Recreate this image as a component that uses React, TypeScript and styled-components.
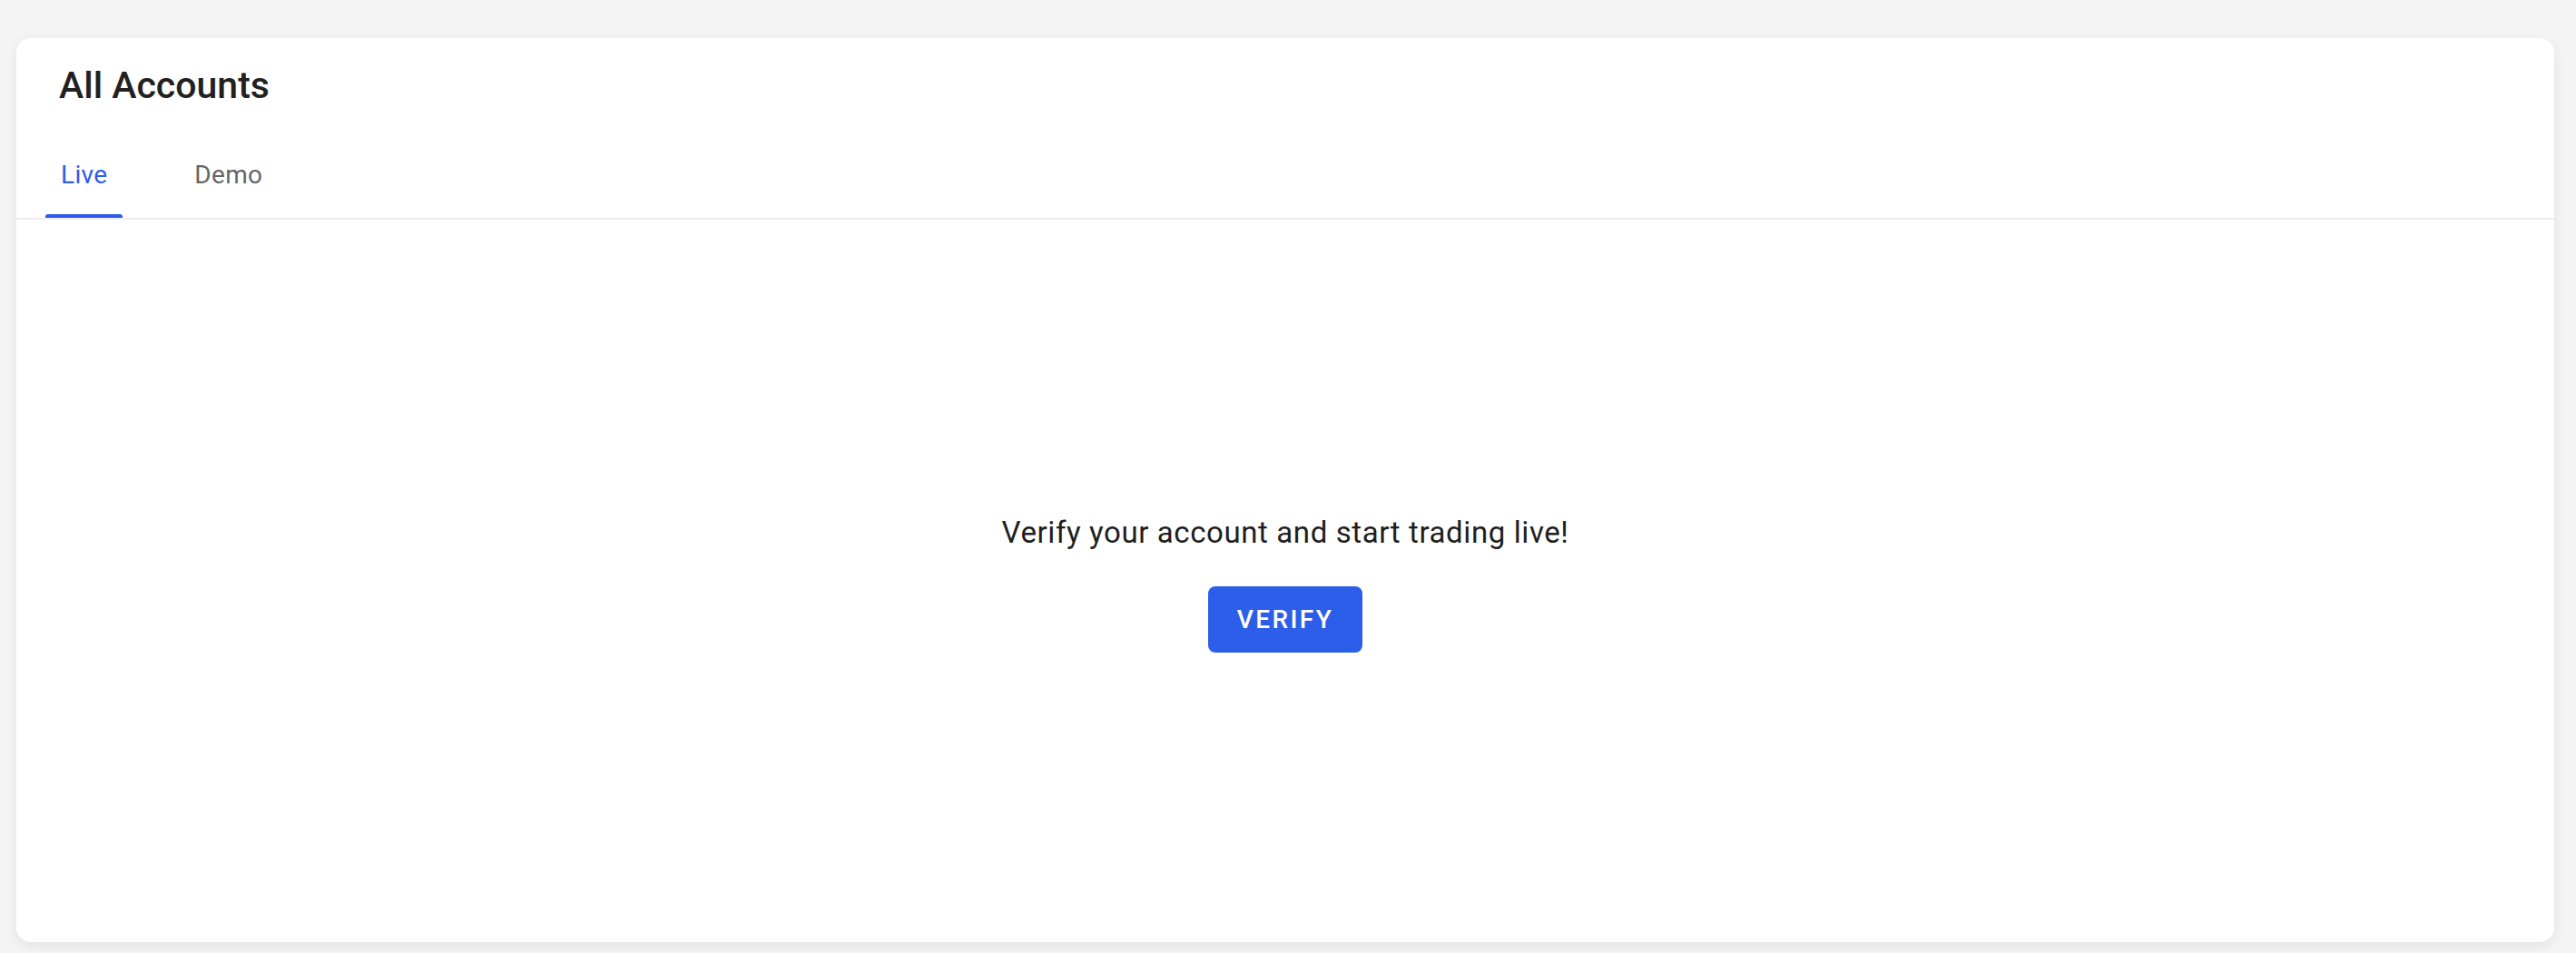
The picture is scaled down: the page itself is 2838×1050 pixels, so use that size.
import { useState } from 'react';
import styled, { createGlobalStyle } from 'styled-components';

const GlobalStyle = createGlobalStyle`
  html, body {
    margin: 0;
    padding: 0;
    background: #f4f4f4;
    font-family: Roboto, 'Liberation Sans', sans-serif;
  }
  * {
    box-sizing: border-box;
  }
`;

const tabs = ['Live', 'Demo'];

export default function App() {
  const [active, setActive] = useState('Live');
  return (
    <>
      <GlobalStyle />
      <Page>
        <Card>
          <Title>All Accounts</Title>
          <TabBar>
            {tabs.map((tab) => (
              <Tab
                key={tab}
                $active={active === tab}
                onClick={() => setActive(tab)}
              >
                {tab}
              </Tab>
            ))}
          </TabBar>
          <Body>
            <Message>Verify your account and start trading live!</Message>
            <VerifyButton>VERIFY</VerifyButton>
          </Body>
        </Card>
      </Page>
    </>
  );
}

const Page = styled.div`
  height: 100vh;
  padding: 42px 24px 12px 18px;
  display: flex;
`;

const Card = styled.div`
  flex: 1;
  display: flex;
  flex-direction: column;
  background: #ffffff;
  border-radius: 16px;
  box-shadow: 0 4px 14px rgba(0, 0, 0, 0.08);
  overflow: hidden;
`;

const Title = styled.h1`
  margin: 27px 0 0 0;
  padding: 0 47px;
  font-size: 41px;
  line-height: 50px;
  font-weight: 500;
  color: #212121;
`;

const TabBar = styled.div`
  display: flex;
  gap: 62px;
  margin-top: 25px;
  padding: 0 32px;
  border-bottom: 2px solid #eeeeee;
`;

interface TabProps {
  $active: boolean;
}

const Tab = styled.button<TabProps>`
  position: relative;
  height: 96px;
  padding: 0 17px;
  border: none;
  background: none;
  font-family: Roboto, 'Liberation Sans', sans-serif;
  font-size: 28px;
  font-weight: 400;
  letter-spacing: 0.3px;
  color: ${({ $active }) => ($active ? '#2c5ce8' : '#666666')};
  cursor: pointer;

  &::after {
    content: '';
    position: absolute;
    left: 0;
    right: 0;
    bottom: 0;
    height: 4px;
    border-radius: 3px 3px 0 0;
    background: ${({ $active }) => ($active ? '#2c5ce8' : 'transparent')};
  }
`;

const Body = styled.div`
  flex: 1;
  display: flex;
  flex-direction: column;
  align-items: center;
  justify-content: center;
`;

const Message = styled.p`
  margin: 0 0 34px 0;
  font-size: 33px;
  line-height: 50px;
  letter-spacing: 0.6px;
  color: #1f1f1f;
`;

const VerifyButton = styled.button`
  height: 73px;
  padding: 0 32px;
  border: none;
  border-radius: 8px;
  background: #2c5ee9;
  color: #ffffff;
  font-family: Roboto, 'Liberation Sans', sans-serif;
  font-size: 28px;
  font-weight: 500;
  letter-spacing: 2.4px;
  cursor: pointer;
`;
